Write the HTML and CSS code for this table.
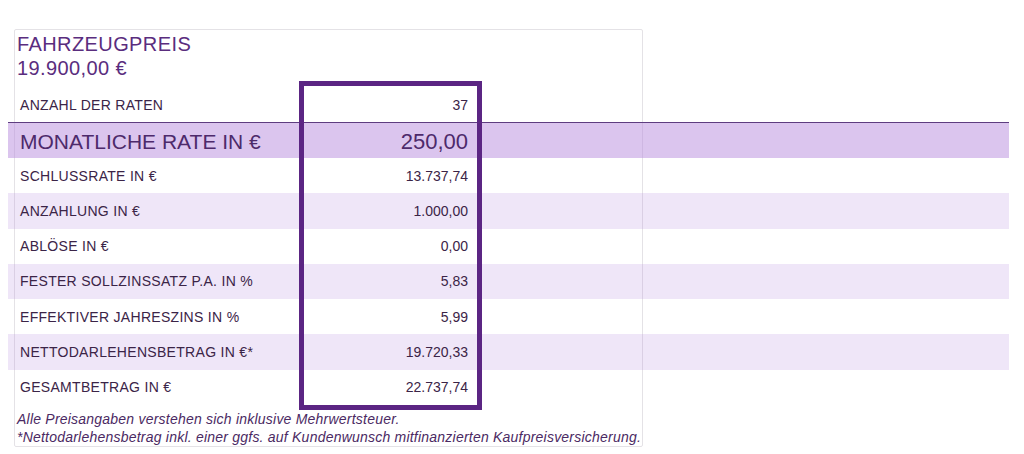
FILE: index.html
```html
<!DOCTYPE html>
<html lang="de">
<head>
<meta charset="utf-8">
<title>Fahrzeugpreis</title>
<link rel="stylesheet" href="styles.css">
</head>
<body>
<div class="page">
  <section class="card">
    <header class="head">
      <div class="head-title">FAHRZEUGPREIS</div>
      <div class="head-price">19.900,00 €</div>
    </header>
    <div class="rows">
      <div class="row"><span class="label">ANZAHL DER RATEN</span><span class="value">37</span></div>
      <div class="row row-main"><span class="label">MONATLICHE RATE IN €</span><span class="value">250,00</span></div>
      <div class="row"><span class="label">SCHLUSSRATE IN €</span><span class="value">13.737,74</span></div>
      <div class="row row-alt"><span class="label">ANZAHLUNG IN €</span><span class="value">1.000,00</span></div>
      <div class="row"><span class="label">ABLÖSE IN €</span><span class="value">0,00</span></div>
      <div class="row row-alt"><span class="label">FESTER SOLLZINSSATZ P.A. IN %</span><span class="value">5,83</span></div>
      <div class="row"><span class="label">EFFEKTIVER JAHRESZINS IN %</span><span class="value">5,99</span></div>
      <div class="row row-alt"><span class="label">NETTODARLEHENSBETRAG IN €*</span><span class="value">19.720,33</span></div>
      <div class="row"><span class="label">GESAMTBETRAG IN €</span><span class="value">22.737,74</span></div>
    </div>
    <footer class="notes">
      <p>Alle Preisangaben verstehen sich inklusive Mehrwertsteuer.</p>
      <p>*Nettodarlehensbetrag inkl. einer ggfs. auf Kundenwunsch mitfinanzierten Kaufpreisversicherung.</p>
    </footer>
    <div class="frame" aria-hidden="true"></div>
  </section>
</div>
</body>
</html>
```

FILE: styles.css
```css
* { box-sizing: border-box; }

body {
  margin: 0;
  background: #ffffff;
  font-family: "Liberation Sans", Arial, sans-serif;
  color: #3b2447;
}

.page {
  padding: 29px 0 0 14px;
}

.card {
  position: relative;
  width: 629px;
  height: 418px;
  border: 1px solid #e4e2e6;
  border-radius: 2px;
  padding: 2px 0 0 2px;
}

.head {
  color: #5a2d7e;
  font-size: 20px;
  line-height: 24px;
  letter-spacing: 0.4px;
}

.rows {
  margin: 7px 0 0 -9px;
  width: 1001px;
}

.row {
  display: flex;
  align-items: center;
  height: 35.25px;
  font-size: 14px;
}

.row:first-child {
  height: 35px;
}

.row-main {
  height: 36px;
  padding-top: 3px;
  border-top: 1px solid #5e3d80;
  background: rgba(184, 140, 222, 0.5);
  font-size: 21px;
  color: #4d2a6b;
}

.row-main .label {
  letter-spacing: 0;
}

.row-main .value {
  font-size: 22px;
}

.row-alt {
  background: rgba(184, 140, 222, 0.22);
}

.label {
  width: 297px;
  padding-left: 12px;
  letter-spacing: 0.3px;
}

.value {
  width: 172px;
  padding-right: 9px;
  text-align: right;
}

.notes {
  margin-top: 5px;
  font-style: italic;
  font-size: 14px;
  line-height: 18px;
  letter-spacing: 0.22px;
  color: #4b2a63;
}

.notes p {
  margin: 0;
}

.frame {
  position: absolute;
  left: 284px;
  top: 51px;
  width: 183px;
  height: 329px;
  border: 5px solid #5b2583;
}
```
